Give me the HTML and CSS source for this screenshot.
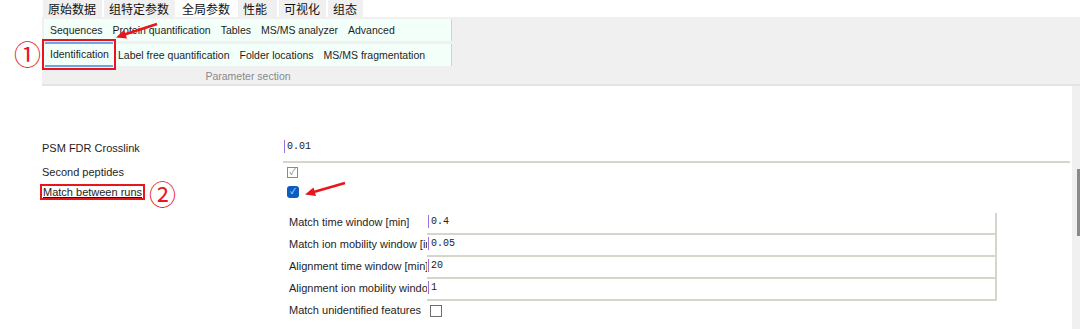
FILE: index.html
```html
<!DOCTYPE html>
<html lang="zh">
<head>
    <meta charset="UTF-8">
    <meta name="viewport" content="width=device-width, initial-scale=1.0">
    <title>全局参数</title>
    <link rel="stylesheet" href="styles.css">
</head>
<body>

    <!-- 顶部标签 -->
    <div class="tabs">
        <span class="tab">原始数据</span>
        <span class="tab">组特定参数</span>
        <span class="tab selected">全局参数</span>
        <span class="tab wide">性能</span>
        <span class="tab">可视化</span>
        <span class="tab">组态</span>
    </div>

    <!-- 参数区 -->
    <div class="ribbon">
        <div class="group">
            <div class="group-row">
                <span class="item">Sequences</span>
                <span class="item">Protein quantification</span>
                <span class="item">Tables</span>
                <span class="item">MS/MS analyzer</span>
                <span class="item">Advanced</span>
            </div>
            <div class="group-row">
                <span class="item active marked">Identification</span>
                <span class="item">Label free quantification</span>
                <span class="item">Folder locations</span>
                <span class="item">MS/MS fragmentation</span>
            </div>
            <div class="group-title">Parameter section</div>
        </div>
    </div>

    <div class="content">
        <div class="params">
            <div class="param first">
                <div class="label">PSM FDR Crosslink</div>
                <div class="value text"><span class="caret"></span>0.01</div>
            </div>
            <div class="param short">
                <div class="label">Second peptides</div>
                <div class="value"><span class="check disabled">&#10003;</span></div>
            </div>
            <div class="param">
                <div class="label"><span class="marked">Match between runs</span></div>
                <div class="value"><span class="check on">&#10003;</span></div>
            </div>

            <div class="sub">
                <div class="sub-row">
                    <div class="sub-label">Match time window [min]</div>
                    <div class="sub-value"><span class="caret"></span>0.4</div>
                </div>
                <div class="sub-row">
                    <div class="sub-label">Match ion mobility window [indices]</div>
                    <div class="sub-value"><span class="caret"></span>0.05</div>
                </div>
                <div class="sub-row">
                    <div class="sub-label">Alignment time window [min]</div>
                    <div class="sub-value"><span class="caret"></span>20</div>
                </div>
                <div class="sub-row">
                    <div class="sub-label">Alignment ion mobility window</div>
                    <div class="sub-value"><span class="caret"></span>1</div>
                </div>
                <div class="sub-row last">
                    <div class="sub-label">Match unidentified features</div>
                    <div class="sub-check"><span class="check off"></span></div>
                </div>
            </div>
        </div>
        <div class="scrollbar"><div class="thumb"></div></div>
    </div>

    <!-- 标注 -->
    <span class="callout one">①</span>
    <span class="callout two">②</span>
    <svg class="arrows" width="1080" height="329" viewBox="0 0 1080 329">
        <line x1="157" y1="24" x2="123" y2="35" stroke="#e8161c" stroke-width="2.5"/>
        <polygon points="116,37.5 127,38.5 124,30" fill="#e8161c"/>
        <line x1="345" y1="183" x2="312" y2="192.5" stroke="#e8161c" stroke-width="2.5"/>
        <polygon points="305,194.5 316,196 313.5,187.5" fill="#e8161c"/>
    </svg>

</body>
</html>
```

FILE: styles.css
```css
body {
    font-family: 'Liberation Sans', 'Noto Sans CJK SC', sans-serif;
    font-size: 11px;
    color: #1e1e1e;
    background-color: white;
    margin: 0;
    width: 1080px;
    height: 329px;
    overflow: hidden;
    position: relative;
}

/* tabs */
.tabs {
    display: flex;
    margin-left: 43px;
    height: 17px;
}

.tab {
    font-family: 'Noto Sans CJK SC', sans-serif;
    font-size: 12px;
    line-height: 17px;
    padding: 0 6px 0 5px;
    margin-right: 2px;
    background-color: #f0f0f0;
    color: #111;
}

.tab.selected {
    background-color: white;
}

.tab.wide {
    padding-right: 10px;
}

/* ribbon */
.ribbon {
    margin-left: 42px;
    height: 63px;
    padding: 2px;
    background-color: #f0f0f0;
    border-bottom: 2px solid #e4e4e4;
}

.group {
    width: 408px;
    font-size: 10.5px;
}

.group-row {
    display: flex;
    align-items: center;
    height: 22px;
    margin-bottom: 3px;
    padding-left: 1px;
    background-color: #f3fff9;
    border-right: 1px solid #cfd3d1;
}

.item {
    padding: 0 5px;
    white-space: nowrap;
}

.item.active {
    margin-top: -1px;
    padding-right: 4px;
    line-height: 21px;
    border-top: 2px solid #6aa8e4;
    border-bottom: 2px solid #6aa8e4;
}

.marked {
    outline: 2px solid #e8161c;
    outline-offset: 1px;
}

.group-title {
    text-align: center;
    color: #8a8a8a;
    line-height: 13px;
    padding-top: 1px;
}

/* content */
.content {
    display: flex;
    height: 243px;
}

.params {
    flex: 1;
    padding-top: 51px;
    padding-left: 42px;
}

.param {
    display: flex;
    align-items: center;
    height: 22px;
}

.param.first {
    height: 26px;
    align-items: stretch;
}

.param.short {
    height: 18px;
}

.label {
    width: 241px;
    display: flex;
    align-items: center;
}

.param.first .label {
    padding-bottom: 5px;
}

.label .marked {
    outline-offset: 0;
    text-decoration: underline;
    padding: 0 1px;
}

.value {
    flex: 1;
    display: flex;
    align-items: center;
    padding-left: 4px;
    margin-right: 2px;
}

.value.text {
    padding-left: 1px;
    padding-bottom: 5px;
    border-bottom: 2px solid #d6d4cb;
    font-family: 'Liberation Mono', monospace;
    font-size: 10px;
    color: #222;
}

.caret {
    display: inline-block;
    width: 1px;
    height: 13px;
    background-color: #a070e0;
    margin-right: 2px;
}

.check {
    display: inline-flex;
    align-items: center;
    justify-content: center;
    width: 11px;
    height: 11px;
    font-size: 9px;
    line-height: 1;
    box-sizing: border-box;
}

.check.disabled {
    border: 1px solid #8a8a8a;
    color: #8a8a8a;
}

.check.on {
    width: 12px;
    height: 12px;
    border-radius: 3px;
    background-color: #0f5cbf;
    color: #dbe8f8;
    font-size: 8px;
}

.check.off {
    width: 12px;
    height: 12px;
    border: 1px solid #6e6e6e;
}

.sub {
    margin-top: 10px;
    margin-left: 243px;
    width: 712px;
}

.sub-row {
    display: flex;
    height: 22px;
}

.sub-label {
    width: 138px;
    padding-left: 4px;
    padding-bottom: 4px;
    white-space: nowrap;
    overflow: hidden;
    display: flex;
    align-items: center;
}

.sub-value {
    flex: 1;
    display: flex;
    align-items: center;
    padding-left: 1px;
    padding-bottom: 3px;
    border-right: 2px solid #d6d4cb;
    border-bottom: 2px solid #d6d4cb;
    font-family: 'Liberation Mono', monospace;
    font-size: 10px;
    color: #222;
}

.sub-row.last {
    height: 20px;
}

.sub-row.last .sub-label {
    padding-bottom: 2px;
}

.sub-check {
    display: flex;
    align-items: center;
    padding-left: 3px;
}

.scrollbar {
    width: 8px;
    background-color: #f0f0f0;
}

.thumb {
    margin-top: 83px;
    margin-left: 5px;
    width: 3px;
    height: 67px;
    background-color: #8a8a8a;
}

/* annotations */
.callout {
    position: absolute;
    font-family: 'Noto Sans CJK SC', sans-serif;
    font-size: 27px;
    line-height: 1;
    color: #e8161c;
}

.callout.one {
    left: 14px;
    top: 40px;
}

.callout.two {
    left: 149px;
    top: 180px;
}

.arrows {
    position: absolute;
    left: 0;
    top: 0;
    pointer-events: none;
}
```
